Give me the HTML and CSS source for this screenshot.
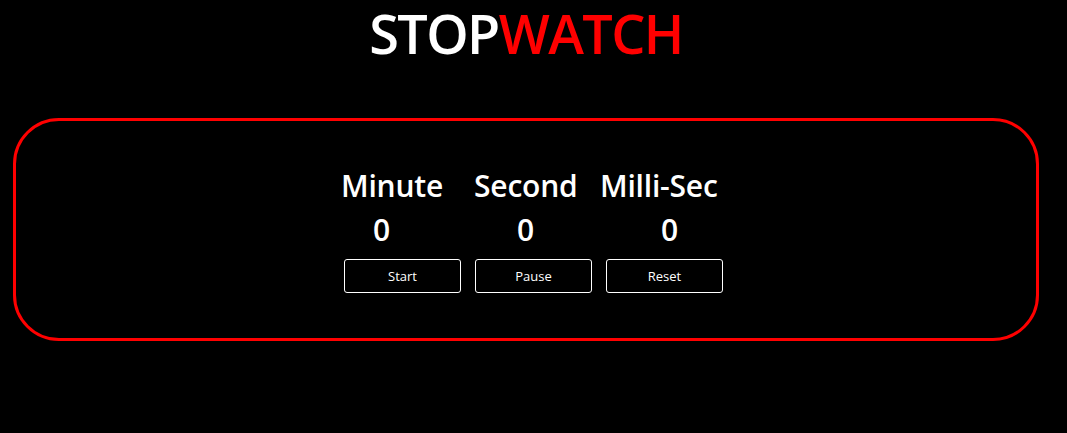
FILE: index.html
```html
<!DOCTYPE html>
<html>
<head>
<meta charset="utf-8">
<link rel="stylesheet" href="styles.css">
</head>
<body>
<h1 class="title">STOP<span class="red">WATCH</span></h1>
<div class="box">
  <div class="inner">
    <div class="labels">
      <div class="label">Minute</div>
      <div class="label">Second</div>
      <div class="label">Milli-Sec</div>
    </div>
    <div class="nums">
      <div class="num">0</div>
      <div class="num">0</div>
      <div class="num">0</div>
    </div>
    <div class="buttons">
      <button class="btn">Start</button>
      <button class="btn">Pause</button>
      <button class="btn">Reset</button>
    </div>
  </div>
</div>
</body>
</html>
```

FILE: styles.css
```css
html, body {
  margin: 0;
  padding: 0;
  background: #000;
}
body {
  font-family: "Open Sans", "Noto Sans", sans-serif;
  color: #fff;
  padding-right: 15px;
}
.title {
  margin: 0;
  font-size: 54px;
  line-height: 66px;
  font-weight: 600;
  text-align: center;
  letter-spacing: -1.6px;
}
.red {
  color: #ff0000;
}
.box {
  margin: 52px 13px 0 13px;
  height: 217px;
  border: 3px solid #ff0000;
  border-radius: 46px;
}
.inner {
  padding: 45px 0 0 325px;
}
.labels {
  display: grid;
  grid-template-columns: 133px 126px auto;
  font-size: 30px;
  font-weight: 600;
  line-height: 40px;
  letter-spacing: -0.2px;
}
.nums {
  display: grid;
  grid-template-columns: 144px 144px auto;
  padding-left: 32px;
  font-size: 30px;
  font-weight: 600;
  line-height: 40px;
  margin-top: 4px;
}
.buttons {
  display: flex;
  gap: 14px;
  margin-top: 9px;
  padding-left: 3px;
}
.btn {
  width: 117px;
  height: 34px;
  background: #000;
  color: #fff;
  border: 1px solid #fff;
  border-radius: 3px;
  font-family: "Open Sans", "Noto Sans", sans-serif;
  font-size: 13px;
  padding: 0;
}
```
